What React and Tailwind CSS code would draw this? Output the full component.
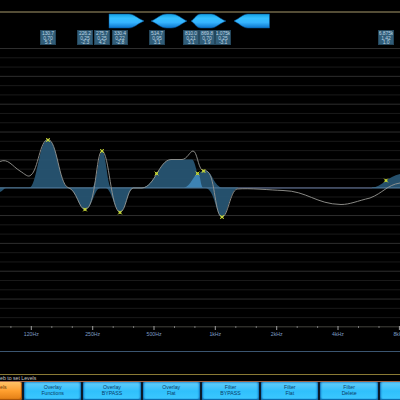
import { Fragment } from "react"

const bands = [
    { gap: "ml-[40px]", freq: "130.7", q: "0.70", gain: "5.1" },
    { gap: "ml-[21px]", freq: "226.2", q: "0.25", gain: "-2.3" },
    { gap: "ml-[1px]", freq: "275.7", q: "0.25", gain: "4.2" },
    { gap: "ml-[2px]", freq: "330.4", q: "0.22", gain: "-2.8" },
    { gap: "ml-[21px]", freq: "514.7", q: "0.95", gain: "3.1" },
    { gap: "ml-[18px]", freq: "810.0", q: "0.21", gain: "3.1" },
    { gap: "ml-0", freq: "869.8", q: "0.70", gain: "1.9" },
    { gap: "ml-0", freq: "1.075k", q: "0.25", gain: "-3.1" },
    { gap: "ml-[147px]", freq: "6.875k", q: "1.42", gain: "1.0" },
]

// Fader caps, drawn in the 400px wide header strip
const handles = [
    "M109 1 H129 C134 1 137 5 144 8 C137 11 134 15 129 15 H109 Z",
    "M151 8 C157 6 160 1 167 1 H171 C178 1 182 6 187 8 C182 10 178 15 171 15 H167 C160 15 157 10 151 8 Z",
    "M191 8 C195 6 196 1 201 1 H211 C216 1 220 6 226 8 C220 10 216 15 211 15 H201 C196 15 195 10 191 8 Z",
    "M234 8 C240 5 243 1 248 1 H269.5 V15 H248 C243 15 240 11 234 8 Z",
]

const fills = [
    "M29 188 C37 187 39 139.5 48 139.5 C57 139.5 59 183 68 188 Z",
    "M68 188 C76 189 79 209.5 85 209.5 C92 209.5 94 189 100 188 Z",
    "M92 188 C97 185 99 151 102 151 C106 151 107 184 111 188 Z",
    "M106 188 C112 190 115 212 120 212 C126 212 127 191 133 188 Z",
    "M141 188 C155 187 159 160 171 159.5 H192 C196 160 198 185 203 188 Z",
    "M183 188 C194 186 197 170.5 204 170.5 C213 170.5 212 184 222 188 Z",
    "M205 188 C215 188 216 217 222 217 C228 217 229 190 238 188 Z",
    "M371 188 C382 187 388 176 400 174 V188 Z",
    "M0 188 H6 C4 188 3 191 0 192 Z",
]

const curve =
    "M0 161.5 C8 158 12 166 20 171 C25 174 28 178 31 175 C38 170 40 139.5 48 139.5 C57 139.5 59 184 68 187.5 C77 190 79 209.5 85 209.5 C96 209.5 96 151 102 151 C109 151 111 212 120 212 C126 212 127 189 133 188 H142 C155 187 159 160 171 159.5 H182 C187 159.5 190 151 193 151 C197 151 198 167 202 170 C205 171 206 170 208 172 C215 177 215 217 222 217 C228 217 230 191 237 189 C250 188 270 190 283 190.5 C307 191 316 204 341 204.5 C350 204.5 357 201 370 198 C383 193 387 185 400 183"

const points = [
    [48, 140], [85, 209.5], [102, 151], [120, 212.5], [156.5, 173.5],
    [197.5, 173.5], [203.5, 171], [222, 217], [386, 180.5],
]

const majorTicks = [
    { x: 31.3, label: "120Hz" },
    { x: 92.7, label: "250Hz" },
    { x: 154, label: "500Hz" },
    { x: 215.3, label: "1kHz" },
    { x: 276.7, label: "2kHz" },
    { x: 338, label: "4kHz" },
    { x: 399.4, label: "8kHz" },
]

const buttons = [
    ["Overlay", "Functions"],
    ["Overlay", "BYPASS"],
    ["Overlay", "Flat"],
    ["Filter", "BYPASS"],
    ["Filter", "Flat"],
    ["Filter", "Delete"],
]

function FaderStrip() {
    return (
        <svg width="400" height="16" className="block">
            <defs>
                <linearGradient id="cap" x1="0" y1="0" x2="0" y2="1">
                    <stop offset="0" stopColor="#159fe0" />
                    <stop offset="0.3" stopColor="#35c0ff" />
                    <stop offset="0.6" stopColor="#36b4ff" />
                    <stop offset="1" stopColor="#0a74cc" />
                </linearGradient>
            </defs>
            {handles.map((d) => (
                <path key={d} d={d} fill="url(#cap)" stroke="#07549a" strokeWidth="0.5" />
            ))}
        </svg>
    )
}

function BandTags() {
    return (
        <div className="flex h-[16px]">
            {bands.map((b) => (
                <div
                    key={b.freq}
                    className={`${b.gap} flex h-[15px] w-[16px] shrink-0 flex-col items-center overflow-hidden border border-[#24465b] bg-[#315d78] text-[5px] leading-[4.5px] tracking-[-0.1px] text-[#b9d2e0]`}
                >
                    <span>{b.freq}</span>
                    <span>{b.q}</span>
                    <span>{b.gain}</span>
                </div>
            ))}
        </div>
    )
}

function ResponseGraph() {
    return (
        <svg width="400" height="294" viewBox="0 46 400 294" className="block">
            {Array.from({ length: 30 }, (_, i) => (
                <rect key={i} x="0" y={48 + i * 9.28} width="400" height="1" fill={i % 3 === 0 ? "#2e2e2e" : "#191919"} />
            ))}
            {fills.map((d) => (
                <path key={d} d={d} fill="#285775" fillOpacity="0.92" />
            ))}
            <path d="M184 188 C191 186 194 174 197.5 174 C201 174 200 185 203 188 Z" fill="#3d83b4" />
            <rect x="0" y="187.3" width="400" height="1.2" fill="#4b7596" />
            <rect x="238" y="187.3" width="134" height="1.2" fill="#45455a" />
            <path d={curve} fill="none" stroke="#979793" strokeWidth="0.9" />
            {points.map(([x, y]) => (
                <g key={x} stroke="#c9d83a" strokeWidth="0.9">
                    <rect x={x - 1.3} y={y - 1.3} width="2.6" height="2.6" fill="#b4c62c" stroke="none" />
                    <path d={`M${x - 1.9} ${y - 1.9} l3.8 3.8 m0 -3.8 l-3.8 3.8`} />
                </g>
            ))}
            <rect x="0" y="326.3" width="400" height="1" fill="#42423c" />
            {majorTicks.map((t) => (
                <Fragment key={t.label}>
                    <rect x={t.x - 20.9} y="326" width="1" height="2" fill="#777" />
                    <rect x={t.x - 0.5} y="326" width="1" height="4" fill="#a0a0a0" />
                    <rect x={t.x + 20} y="326" width="1" height="2" fill="#777" />
                    <text x={t.x} y="335.6" textAnchor="middle" fontSize="5.2" fill="#7d9cc4">
                        {t.label}
                    </text>
                </Fragment>
            ))}
        </svg>
    )
}

function SoftKeys() {
    return (
        <div className="flex h-[19px] gap-[2px] overflow-hidden border-t border-[#a5674a] bg-[#0a1a2a] text-center text-[5.2px] leading-[6px]">
            <div className="h-[18px] w-[22px] shrink-0 rounded-r-[2px] bg-gradient-to-b from-[#ffc266] via-[#ff9f2e] to-[#e07c12] pt-[2px] text-[#6b3c08] shadow-[inset_-1px_-1px_1px_#a55208]">
                <span className="mr-[18px] block whitespace-nowrap">els</span>
            </div>
            {buttons.map(([top, bottom]) => (
                <div
                    key={top + bottom}
                    className="h-[18px] w-[57.3px] shrink-0 rounded-[2px] bg-gradient-to-b from-[#62cdfa] via-[#2fc0fc] to-[#3cc8ff] pt-[2px] text-[#0b3d68] shadow-[inset_0_-1px_1px_#0b68a8,inset_1px_0_2px_#1277c0,inset_-1px_0_2px_#1277c0]"
                >
                    <div>{top}</div>
                    <div>{bottom}</div>
                </div>
            ))}
            <div className="h-[18px] w-[57.3px] shrink-0 rounded-[2px] bg-gradient-to-b from-[#62cdfa] via-[#2fc0fc] to-[#3cc8ff] shadow-[inset_0_-1px_1px_#0b68a8,inset_1px_0_2px_#1277c0]" />
        </div>
    )
}

export default function App() {
    return (
        <div className="flex h-[400px] w-[400px] flex-col overflow-hidden bg-black font-['Liberation_Sans',sans-serif]">
            <div className="h-[13px] shrink-0 border-b-2 border-[#544d36]" />
            <FaderStrip />
            <div className="mt-[1px]">
                <BandTags />
            </div>
            <ResponseGraph />
            <div className="mt-[11px] h-px shrink-0 bg-[#3b5570]" />
            <div className="mt-[22px] h-px shrink-0 bg-[#8a7a34]" />
            <div className="mt-px h-[5px] shrink-0 text-[5.2px] leading-[5px] whitespace-nowrap text-[#c4c4c4]">eb to set Levels</div>
            <SoftKeys />
        </div>
    )
}
